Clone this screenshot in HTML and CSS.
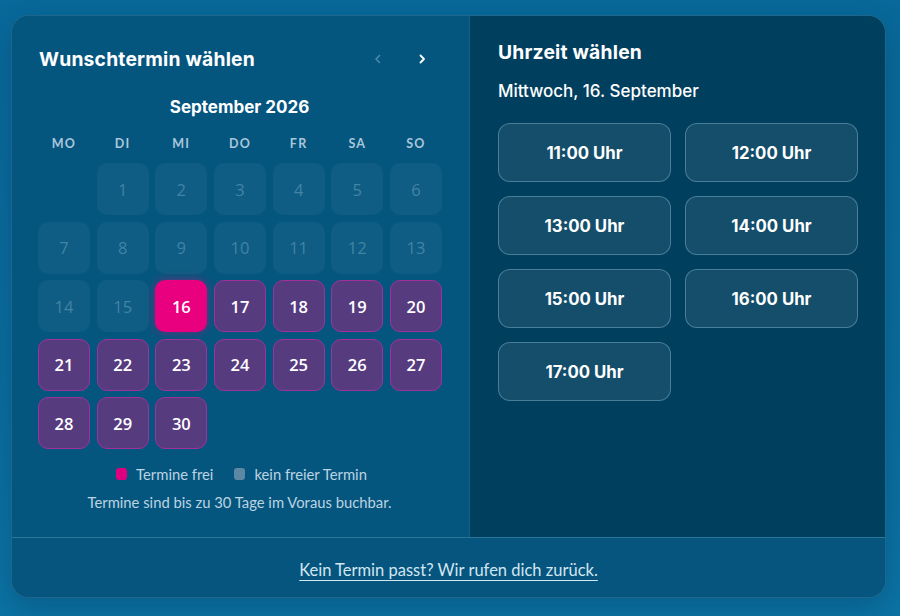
FILE: index.html
```html
<!DOCTYPE html>
<html lang="de">
<head>
<meta charset="utf-8">
<title>Terminwahl</title>
<link rel="stylesheet" href="styles.css">
</head>
<body>
<div class="page">
  <div class="card">
    <div class="panels">
      <section class="cal">
        <div class="cal-head">
          <h2 class="title">Wunschtermin wählen</h2>
          <div class="nav">
            <span class="arrow dim"><svg width="8" height="10" viewBox="0 0 8 10"><path d="M5.5 1.5 L2 5 L5.5 8.5" fill="none" stroke="currentColor" stroke-width="1.6" stroke-linecap="round" stroke-linejoin="round"/></svg></span>
            <span class="arrow"><svg width="8" height="10" viewBox="0 0 8 10"><path d="M2.5 1.5 L6 5 L2.5 8.5" fill="none" stroke="currentColor" stroke-width="1.8" stroke-linecap="round" stroke-linejoin="round"/></svg></span>
          </div>
        </div>
        <div class="month">September 2026</div>
        <div class="weekdays">
          <div class="wd">MO</div><div class="wd">DI</div><div class="wd">MI</div><div class="wd">DO</div><div class="wd">FR</div><div class="wd">SA</div><div class="wd">SO</div>
        </div>
        <div class="grid">
          <div class="day empty"></div>
          <div class="day off">1</div><div class="day off">2</div><div class="day off">3</div><div class="day off">4</div><div class="day off">5</div><div class="day off">6</div>
          <div class="day off">7</div><div class="day off">8</div><div class="day off">9</div><div class="day off">10</div><div class="day off">11</div><div class="day off">12</div><div class="day off">13</div>
          <div class="day off">14</div><div class="day off">15</div><div class="day sel">16</div><div class="day free">17</div><div class="day free">18</div><div class="day free">19</div><div class="day free">20</div>
          <div class="day free">21</div><div class="day free">22</div><div class="day free">23</div><div class="day free">24</div><div class="day free">25</div><div class="day free">26</div><div class="day free">27</div>
          <div class="day free">28</div><div class="day free">29</div><div class="day free">30</div>
        </div>
        <div class="legend">
          <span class="lg"><i class="sw pink"></i>Termine frei</span>
          <span class="lg"><i class="sw gray"></i>kein freier Termin</span>
        </div>
        <p class="note">Termine sind bis zu 30 Tage im Voraus buchbar.</p>
      </section>
      <section class="times">
        <h2 class="title">Uhrzeit wählen</h2>
        <div class="date">Mittwoch, 16. September</div>
        <div class="slots">
          <button class="slot">11:00 Uhr</button>
          <button class="slot">12:00 Uhr</button>
          <button class="slot">13:00 Uhr</button>
          <button class="slot">14:00 Uhr</button>
          <button class="slot">15:00 Uhr</button>
          <button class="slot">16:00 Uhr</button>
          <button class="slot">17:00 Uhr</button>
        </div>
      </section>
    </div>
    <div class="foot">
      <a class="callback" href="#">Kein Termin passt? Wir rufen dich zurück.</a>
    </div>
  </div>
</div>
</body>
</html>
```
FILE: styles.css
```css
* { box-sizing: border-box; }
html, body { margin: 0; padding: 0; }
body {
  width: 900px;
  height: 616px;
  overflow: hidden;
  background: linear-gradient(180deg, #08699a 0%, #0a6d9e 60%, #0b74a5 100%);
  font-family: "Lato", "Open Sans", sans-serif;
  color: #fff;
}
.page {
  padding: 15px 14px 0 11px;
}
.card {
  width: 875px;
  height: 583px;
  border-radius: 18px;
  overflow: hidden;
  border: 1px solid rgba(255,255,255,0.10);
  background: #05557e;
  display: flex;
  flex-direction: column;
  box-shadow: 0 12px 30px rgba(0,30,60,0.25);
}
.panels {
  display: flex;
  height: 522px;
  border-bottom: 1px solid rgba(120,180,210,0.35);
}
.cal {
  width: 458px;
  padding: 30px 28px 0 26px;
  background: #05567f;
  border-right: 1px solid rgba(255,255,255,0.06);
}
.times {
  flex: 1;
  background: #013f5f;
  padding: 24px 27px 0 28px;
}
.title {
  margin: 0;
  font-family: "Inter", sans-serif;
  font-weight: 700;
  font-size: 19.3px;
  line-height: 24px;
  letter-spacing: 0.2px;
  color: #fff;
}
.cal .title { padding-left: 1px; }
.cal-head {
  display: flex;
  align-items: center;
  justify-content: space-between;
  height: 26px;
}
.nav {
  display: flex;
  gap: 36px;
  padding-right: 15px;
}
.arrow { color: #fff; display: flex; }
.arrow.dim { color: rgba(160,200,225,0.45); }
.month {
  margin-top: 24px;
  text-align: center;
  font-family: "Inter", sans-serif;
  font-weight: 700;
  font-size: 17px;
  line-height: 22px;
}
.weekdays,
.grid {
  display: grid;
  grid-template-columns: repeat(7, 52px);
  column-gap: 6.66px;
}
.weekdays { margin-top: 18px; }
.grid {
  margin-top: 11px;
  row-gap: 6.5px;
  grid-auto-rows: 52px;
}
.wd {
  text-align: center;
  font-size: 12.5px;
  font-weight: 700;
  letter-spacing: 1.2px;
  color: #a9c7da;
  line-height: 16px;
}
.day {
  border-radius: 10px;
  display: flex;
  align-items: center;
  justify-content: center;
  font-family: "Open Sans", sans-serif;
  font-size: 16.5px;
  font-weight: 600;
}
.day.off {
  background: rgba(255,255,255,0.045);
  color: rgba(170,205,225,0.35);
  font-weight: 400;
}
.day.free {
  background: #573b7f;
  border: 1px solid #a0309c;
  color: #fff;
}
.day.sel {
  background: #e8007f;
  color: #fff;
  box-shadow: 0 0 10px rgba(232,0,127,0.45);
}
.legend {
  margin-top: 16px;
  display: flex;
  justify-content: center;
  gap: 21px;
  font-size: 14.8px;
  color: #bcd3e1;
  line-height: 18px;
  padding-left: 4px;
}
.lg { display: flex; align-items: center; gap: 9px; }
.sw { width: 11px; height: 12px; border-radius: 3px; display: inline-block; }
.sw.pink { background: #e0007f; }
.sw.gray { background: #5c88a3; }
.note {
  margin: 10px 0 0;
  text-align: center;
  font-size: 14.8px;
  color: #bcd3e1;
  line-height: 18px;
}
.date {
  margin-top: 17px;
  font-family: "Inter", sans-serif;
  font-weight: 500;
  font-size: 17px;
  line-height: 20px;
}
.slots {
  margin-top: 22px;
  display: grid;
  grid-template-columns: 173px 173px;
  column-gap: 14px;
  row-gap: 14px;
  grid-auto-rows: 59px;
}
.slot {
  background: rgba(255,255,255,0.08);
  border: 1px solid rgba(160,205,230,0.38);
  border-radius: 12px;
  color: #fff;
  font-family: "Inter", sans-serif;
  font-weight: 700;
  font-size: 16.8px;
  cursor: pointer;
}
.foot {
  flex: 1;
  display: flex;
  align-items: center;
  justify-content: center;
  background: #05557e;
  padding-top: 4px;
}
.callback {
  color: #d3e6f1;
  font-size: 16.5px;
  text-decoration: underline;
  text-underline-offset: 4px;
}
```
